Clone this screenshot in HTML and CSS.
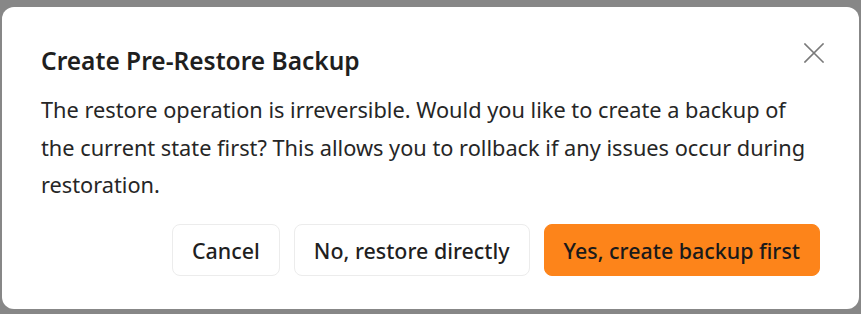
FILE: index.html
```html
<!DOCTYPE html>
<html lang="en">
<head>
<meta charset="utf-8">
<title>Create Pre-Restore Backup</title>
<link rel="stylesheet" href="styles.css">
</head>
<body>
<div class="overlay">
  <div class="dialog" role="dialog" aria-labelledby="dlg-title">
    <div class="header">
      <h2 id="dlg-title" class="title">Create Pre-Restore Backup</h2>
      <button class="close" aria-label="Close">
        <svg width="20" height="20" viewBox="0 0 20 20" aria-hidden="true">
          <path d="M1 1 L19 19 M19 1 L1 19" stroke="#7a7a7a" stroke-width="1.6" fill="none" stroke-linecap="square"/>
        </svg>
      </button>
    </div>
    <p class="message">The restore operation is irreversible. Would you like to create a backup of the current state first? This allows you to rollback if any issues occur during restoration.</p>
    <div class="actions">
      <button class="btn btn-default">Cancel</button>
      <button class="btn btn-default">No, restore directly</button>
      <button class="btn btn-primary">Yes, create backup first</button>
    </div>
  </div>
</div>
</body>
</html>
```
FILE: styles.css
```css
html, body {
  margin: 0;
  padding: 0;
  background: #878787;
}
.overlay {
  padding: 7px 2px 5px 2px;
}
.dialog {
  box-sizing: border-box;
  width: 857px;
  height: 302px;
  background: #ffffff;
  border-radius: 12px;
  padding: 38px 39px 33px 39px;
  font-family: "Noto Sans", "Open Sans", sans-serif;
  color: #1f1f1f;
  display: flex;
  flex-direction: column;
}
.header {
  display: flex;
  justify-content: space-between;
  align-items: flex-start;
}
.title {
  margin: 0;
  font-size: 24.5px;
  font-weight: 600;
  line-height: 31px;
  color: #1f1f1f;
}
.close {
  border: 0;
  background: none;
  padding: 0;
  margin: -2px -4px 0 0;
  width: 20px;
  height: 20px;
  cursor: pointer;
}
.close svg { display: block; }
.message {
  margin: 15px 0 0 0;
  font-size: 21.75px;
  line-height: 37.5px;
  color: #262626;
}
.actions {
  margin-top: auto;
  display: flex;
  justify-content: flex-end;
  gap: 14px;
}
.btn {
  box-sizing: border-box;
  height: 52px;
  padding: 0 19px;
  border-radius: 8px;
  font-family: inherit;
  font-size: 21.4px;
  font-weight: 500;
  color: #1f1f1f;
  cursor: pointer;
}
.btn-default {
  background: #ffffff;
  border: 1px solid #ececec;
}
.btn-primary {
  background: #fd841a;
  border: 1px solid #fd841a;
  color: #1a1a1a;
}
```
